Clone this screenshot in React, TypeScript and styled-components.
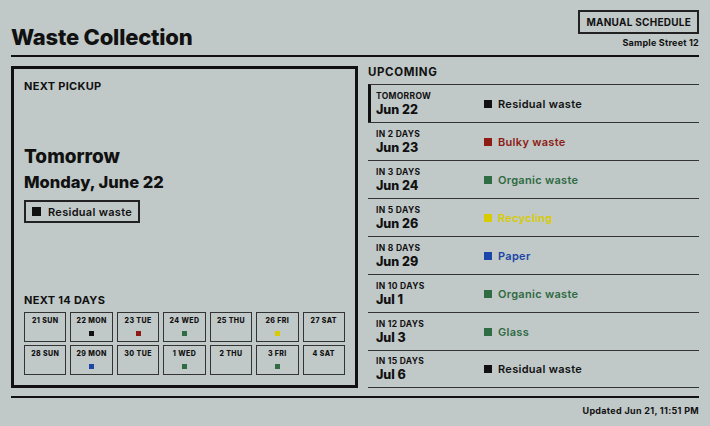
import styled, { createGlobalStyle } from 'styled-components';

const colors: Record<string, string> = {
    residual: '#111111',
    bulky: '#8e1c14',
    organic: '#2f6b43',
    recycling: '#d8cc00',
    paper: '#1b45a6',
    glass: '#2f6b43'
};

const upcoming = [
    { when: 'TOMORROW', date: 'Jun 22', kind: 'residual', label: 'Residual waste' },
    { when: 'IN 2 DAYS', date: 'Jun 23', kind: 'bulky', label: 'Bulky waste' },
    { when: 'IN 3 DAYS', date: 'Jun 24', kind: 'organic', label: 'Organic waste' },
    { when: 'IN 5 DAYS', date: 'Jun 26', kind: 'recycling', label: 'Recycling' },
    { when: 'IN 8 DAYS', date: 'Jun 29', kind: 'paper', label: 'Paper' },
    { when: 'IN 10 DAYS', date: 'Jul 1', kind: 'organic', label: 'Organic waste' },
    { when: 'IN 12 DAYS', date: 'Jul 3', kind: 'glass', label: 'Glass' },
    { when: 'IN 15 DAYS', date: 'Jul 6', kind: 'residual', label: 'Residual waste' }
];

const days: { label: string; kind?: string }[] = [
    { label: '21 SUN' },
    { label: '22 MON', kind: 'residual' },
    { label: '23 TUE', kind: 'bulky' },
    { label: '24 WED', kind: 'organic' },
    { label: '25 THU' },
    { label: '26 FRI', kind: 'recycling' },
    { label: '27 SAT' },
    { label: '28 SUN' },
    { label: '29 MON', kind: 'paper' },
    { label: '30 TUE' },
    { label: '1 WED', kind: 'organic' },
    { label: '2 THU' },
    { label: '3 FRI', kind: 'glass' },
    { label: '4 SAT' }
];

const GlobalStyle = createGlobalStyle`
    html, body {
        margin: 0;
        background: #c0c8c8;
    }
    body {
        font-family: Inter, 'Liberation Sans', sans-serif;
        color: #111;
    }
`;

const Screen = styled.div`
    width: 710px;
    height: 426px;
    box-sizing: border-box;
    padding: 11px 11px 0;
    display: flex;
    flex-direction: column;
`;

const Header = styled.header`
    height: 46px;
    box-sizing: border-box;
    display: flex;
    justify-content: space-between;
    align-items: flex-end;
    border-bottom: 2px solid #111;
`;

const Title = styled.h1`
    margin: 0 0 5px;
    font-size: 22px;
    font-weight: 800;
    letter-spacing: -0.2px;
    line-height: 26px;
`;

const HeaderSide = styled.div`
    display: flex;
    flex-direction: column;
    align-items: flex-end;
    gap: 3px;
    margin-bottom: 6px;
`;

const ScheduleButton = styled.button`
    height: 24px;
    box-sizing: border-box;
    padding: 0 6px;
    border: 2px solid #222;
    background: transparent;
    font-family: inherit;
    font-size: 10px;
    font-weight: 700;
    letter-spacing: 0.25px;
    color: #111;
`;

const Street = styled.div`
    font-size: 9px;
    font-weight: 700;
    letter-spacing: 0.2px;
    line-height: 12px;
`;

const Main = styled.main`
    margin-top: 9px;
    height: 321px;
    display: grid;
    grid-template-columns: 347px 1fr;
    gap: 10px;
`;

const Panel = styled.section`
    border: 3px solid #111;
    padding: 10px;
    display: flex;
    flex-direction: column;
    justify-content: space-between;
`;

const Caption = styled.div`
    font-size: 11px;
    font-weight: 700;
    letter-spacing: 0.3px;
    line-height: 14px;
`;

const Pickup = styled.div`
    display: flex;
    flex-direction: column;
    align-items: flex-start;
    margin-bottom: 20px;
`;

const Big = styled.div<{ $size: number }>`
    font-size: ${(p) => p.$size}px;
    font-weight: 800;
    line-height: ${(p) => p.$size + 8}px;
`;

const Badge = styled.div`
    margin-top: 6px;
    height: 23px;
    box-sizing: border-box;
    display: flex;
    align-items: center;
    gap: 7px;
    padding: 0 6px;
    border: 2px solid #222;
    font-size: 11px;
    font-weight: 600;
    letter-spacing: 0.3px;
`;

const Swatch = styled.span<{ $color: string; $size: number }>`
    display: inline-block;
    width: ${(p) => p.$size}px;
    height: ${(p) => p.$size}px;
    background: ${(p) => p.$color};
    flex: none;
`;

const DaysGrid = styled.div`
    margin-top: 5px;
    display: grid;
    grid-template-columns: repeat(7, 1fr);
    gap: 3px 4px;
`;

const Tile = styled.div`
    height: 30px;
    box-sizing: border-box;
    border: 1.5px solid #333;
    display: flex;
    flex-direction: column;
    align-items: center;
    padding-top: 4px;
    gap: 6px;
`;

const TileLabel = styled.div`
    font-size: 7px;
    font-weight: 800;
    letter-spacing: 0.4px;
    line-height: 8px;
`;

const List = styled.section`
    display: flex;
    flex-direction: column;
`;

const ListHeading = styled.div`
    height: 18px;
    font-size: 11.5px;
    font-weight: 700;
    letter-spacing: 0.6px;
    line-height: 12px;
`;

const Row = styled.div<{ $active: boolean }>`
    height: 38px;
    box-sizing: border-box;
    display: grid;
    grid-template-columns: 108px 1fr;
    align-items: center;
    padding-left: ${(p) => (p.$active ? 5 : 8)}px;
    border-top: 1.5px solid #333;
    border-left: ${(p) => (p.$active ? '3px solid #111' : 'none')};
    &:last-child {
        border-bottom: 1.5px solid #333;
    }
`;

const When = styled.div`
    display: flex;
    flex-direction: column;
`;

const WhenLabel = styled.div`
    font-size: 8.5px;
    font-weight: 700;
    letter-spacing: 0.3px;
    line-height: 11px;
`;

const WhenDate = styled.div`
    font-size: 12.5px;
    font-weight: 800;
    line-height: 15px;
`;

const Kind = styled.div<{ $color: string }>`
    display: flex;
    align-items: center;
    gap: 6px;
    color: ${(p) => p.$color};
    font-size: 11px;
    font-weight: 600;
    letter-spacing: 0.3px;
`;

const Footer = styled.footer`
    margin-top: 9px;
    border-top: 2px solid #111;
    padding-top: 7px;
    text-align: right;
    font-size: 9px;
    font-weight: 700;
    letter-spacing: 0.3px;
`;

export default function App() {
    return (
        <>
            <GlobalStyle />
            <Screen>
                <Header>
                    <Title>Waste Collection</Title>
                    <HeaderSide>
                        <ScheduleButton>MANUAL SCHEDULE</ScheduleButton>
                        <Street>Sample Street 12</Street>
                    </HeaderSide>
                </Header>
                <Main>
                    <Panel>
                        <Caption>NEXT PICKUP</Caption>
                        <Pickup>
                            <Big $size={19}>Tomorrow</Big>
                            <Big $size={16.5}>Monday, June 22</Big>
                            <Badge>
                                <Swatch $color={colors.residual} $size={9} />
                                Residual waste
                            </Badge>
                        </Pickup>
                        <div>
                            <Caption>NEXT 14 DAYS</Caption>
                            <DaysGrid>
                                {days.map((d) => (
                                    <Tile key={d.label}>
                                        <TileLabel>{d.label}</TileLabel>
                                        {d.kind && (
                                            <Swatch $color={colors[d.kind]} $size={5} />
                                        )}
                                    </Tile>
                                ))}
                            </DaysGrid>
                        </div>
                    </Panel>
                    <List>
                        <ListHeading>UPCOMING</ListHeading>
                        {upcoming.map((u, i) => (
                            <Row key={u.when} $active={i === 0}>
                                <When>
                                    <WhenLabel>{u.when}</WhenLabel>
                                    <WhenDate>{u.date}</WhenDate>
                                </When>
                                <Kind $color={colors[u.kind]}>
                                    <Swatch $color={colors[u.kind]} $size={8} />
                                    {u.label}
                                </Kind>
                            </Row>
                        ))}
                    </List>
                </Main>
                <Footer>Updated Jun 21, 11:51 PM</Footer>
            </Screen>
        </>
    );
}
